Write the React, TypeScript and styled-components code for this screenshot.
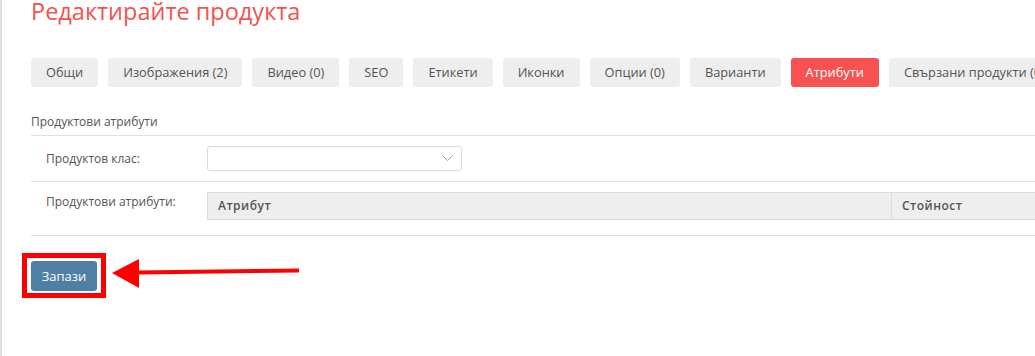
import React from "react";
import styled, { createGlobalStyle } from "styled-components";

const GlobalStyle = createGlobalStyle`
  html, body { margin: 0; padding: 0; background: #fff; }
  body { font-family: "Open Sans", "Noto Sans", Arial, sans-serif; color: #555; }
  * { box-sizing: border-box; }
`;

const Page = styled.div`
  height: 356px;
  width: 1035px;
  overflow: hidden;
  border-left: 2px solid #e1e1e1;
  padding-left: 29px;
  background: #fff;
`;

const Title = styled.h1`
  margin: 0;
  font-size: 23.5px;
  line-height: 22px;
  font-weight: 400;
  color: #f3524f;
  white-space: nowrap;
`;

const Tabs = styled.div`
  display: flex;
  gap: 10px;
  margin-top: 36px;
  white-space: nowrap;
`;

const Tab = styled.div<{ $active?: boolean }>`
  flex: none;
  height: 29px;
  line-height: 29px;
  padding: 0 15px;
  font-size: 12.8px;
  border-radius: 3px;
  background: ${(p) => (p.$active ? "#f75151" : "#eeeeee")};
  color: ${(p) => (p.$active ? "#ffffff" : "#555555")};
`;

const SectionHeader = styled.div`
  margin-top: 26px;
  font-size: 12px;
  line-height: 17px;
  padding-bottom: 5px;
  border-bottom: 1px solid #e0e0e0;
  color: #555;
`;

const Row = styled.div<{ $align: string; $pb: number }>`
  display: flex;
  align-items: ${(p) => p.$align};
  padding: 10px 0 ${(p) => p.$pb}px 15px;
  border-bottom: 1px solid #e0e0e0;
`;

const Label = styled.div<{ $mt?: number }>`
  flex: none;
  width: 161px;
  font-size: 12px;
  line-height: 17px;
  color: #555;
  margin-top: ${(p) => p.$mt || 0}px;
`;

const Select = styled.div`
  width: 255px;
  height: 25px;
  border: 1px solid #dcdcdc;
  border-radius: 3px;
  background: #fff;
  display: flex;
  align-items: center;
  justify-content: flex-end;
  padding-right: 8px;
`;

const Table = styled.div`
  flex: none;
  width: 900px;
  display: grid;
  grid-template-columns: 683px 1fr;
  border: 1px solid #dcdcdc;
  background: #eeeeee;
`;

const HeadCell = styled.div<{ $divider?: boolean }>`
  height: 26px;
  line-height: 26px;
  padding: 0 10px;
  font-size: 12px;
  font-weight: 600;
  letter-spacing: 0.5px;
  color: #555;
  border-left: ${(p) => (p.$divider ? "1px solid #dcdcdc" : "none")};
`;

const Actions = styled.div`
  display: flex;
  align-items: flex-start;
  margin-top: 17px;
  margin-left: -9px;
`;

const Highlight = styled.div`
  border: 5px solid #ff0000;
  padding: 3px 4px 2px;
`;

const SaveButton = styled.button`
  display: block;
  width: 66px;
  height: 30px;
  border: none;
  border-radius: 3px;
  background: #4f7fa5;
  color: #fff;
  font-family: "Open Sans", "Noto Sans", Arial, sans-serif;
  font-size: 13px;
  padding: 0;
`;

const Arrow = styled.svg`
  flex: none;
  margin-left: 6px;
  margin-top: 6px;
`;

const tabs = [
  "Общи",
  "Изображения (2)",
  "Видео (0)",
  "SEO",
  "Етикети",
  "Иконки",
  "Опции (0)",
  "Варианти",
  "Атрибути",
  "Свързани продукти (0)",
];

export default function App() {
  return (
    <>
      <GlobalStyle />
      <Page>
        <Title>Редактирайте продукта</Title>
        <Tabs>
          {tabs.map((t) => (
            <Tab key={t} $active={t === "Атрибути"}>
              {t}
            </Tab>
          ))}
        </Tabs>
        <SectionHeader>Продуктови атрибути</SectionHeader>
        <Row $align="center" $pb={10}>
          <Label>Продуктов клас:</Label>
          <Select>
            <svg width="11" height="7" viewBox="0 0 11 7">
              <polyline points="0.5,0.5 5.5,5.5 10.5,0.5" fill="none" stroke="#a0a0a0" strokeWidth="1" />
            </svg>
          </Select>
        </Row>
        <Row $align="flex-start" $pb={15}>
          <Label $mt={1}>Продуктови атрибути:</Label>
          <Table>
            <HeadCell>Атрибут</HeadCell>
            <HeadCell $divider>Стойност</HeadCell>
          </Table>
        </Row>
        <Actions>
          <Highlight>
            <SaveButton>Запази</SaveButton>
          </Highlight>
          <Arrow width="190" height="30" viewBox="0 0 190 30">
            <polygon points="0,14 27,0 27,29" fill="#ff0000" />
            <polygon points="26,11.5 187,9.5 187,13.5 26,15.5" fill="#ff0000" />
          </Arrow>
        </Actions>
      </Page>
    </>
  );
}
